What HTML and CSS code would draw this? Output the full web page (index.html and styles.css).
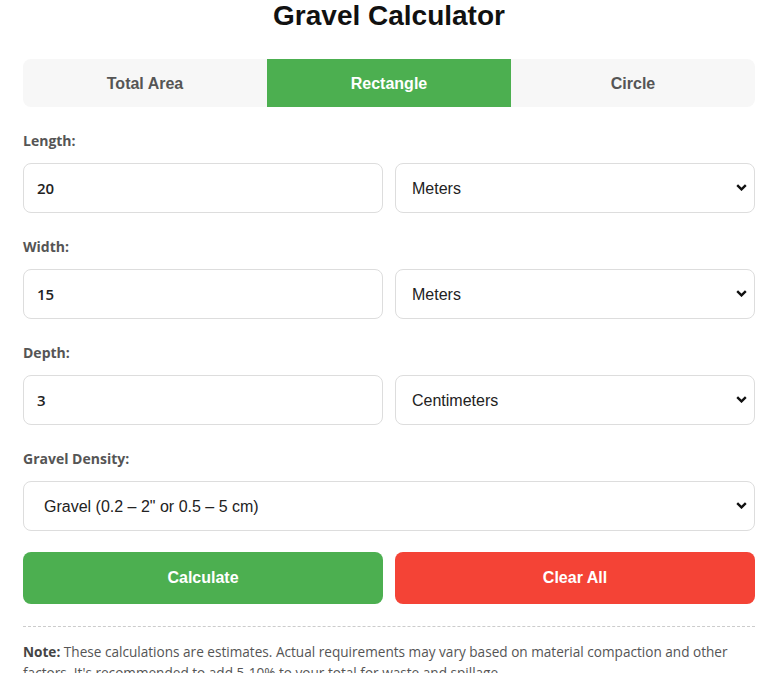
FILE: index.html
```html
<!DOCTYPE html>
<html lang="en">
<head>
<meta charset="utf-8">
<title>Gravel Calculator</title>
<link rel="stylesheet" href="styles.css">
</head>
<body>
<div class="calc">
  <h1 class="title">Gravel Calculator</h1>
  <div class="tabs">
    <button class="tab">Total Area</button>
    <button class="tab active">Rectangle</button>
    <button class="tab">Circle</button>
  </div>

  <div class="field">
    <label class="label">Length:</label>
    <div class="row">
      <input class="input" type="text" value="20">
      <div class="select-wrap">
        <select class="select"><option>Meters</option></select>
        <svg class="chev" width="11" height="7" viewBox="0 0 11 7"><path d="M1.2 1.2 L5.5 5.4 L9.8 1.2" fill="none" stroke="#111" stroke-width="2.4"/></svg>
      </div>
    </div>
  </div>

  <div class="field">
    <label class="label">Width:</label>
    <div class="row">
      <input class="input" type="text" value="15">
      <div class="select-wrap">
        <select class="select"><option>Meters</option></select>
        <svg class="chev" width="11" height="7" viewBox="0 0 11 7"><path d="M1.2 1.2 L5.5 5.4 L9.8 1.2" fill="none" stroke="#111" stroke-width="2.4"/></svg>
      </div>
    </div>
  </div>

  <div class="field">
    <label class="label">Depth:</label>
    <div class="row">
      <input class="input" type="text" value="3">
      <div class="select-wrap">
        <select class="select"><option>Centimeters</option></select>
        <svg class="chev" width="11" height="7" viewBox="0 0 11 7"><path d="M1.2 1.2 L5.5 5.4 L9.8 1.2" fill="none" stroke="#111" stroke-width="2.4"/></svg>
      </div>
    </div>
  </div>

  <div class="field">
    <label class="label">Gravel Density:</label>
    <div class="select-wrap">
      <select class="select wide"><option>Gravel (0.2 – 2" or 0.5 – 5 cm)</option></select>
      <svg class="chev" width="11" height="7" viewBox="0 0 11 7"><path d="M1.2 1.2 L5.5 5.4 L9.8 1.2" fill="none" stroke="#111" stroke-width="2.4"/></svg>
    </div>
  </div>

  <div class="actions">
    <button class="btn calc-btn">Calculate</button>
    <button class="btn clear-btn">Clear All</button>
  </div>

  <p class="note"><strong>Note:</strong> These calculations are estimates. Actual requirements may vary based on material compaction and other factors. It's recommended to add 5-10% to your total for waste and spillage.</p>
</div>
</body>
</html>
```

FILE: styles.css
```css
* { box-sizing: border-box; }
html, body { margin: 0; padding: 0; background: #fff; }
body { font-family: "Open Sans", "Noto Sans", sans-serif; color: #333; }

.calc {
  width: 781px;
  padding: 0 26px 0 23px;
  overflow: hidden;
}

.title {
  margin: 0 0 27px;
  font-family: "Liberation Sans", Arial, sans-serif;
  font-size: 28px;
  line-height: 32px;
  font-weight: 700;
  text-align: center;
  color: #111;
}

.tabs {
  display: grid;
  grid-template-columns: 1fr 1fr 1fr;
  height: 48px;
  background: #f7f7f7;
  border-radius: 8px;
  overflow: hidden;
}
.tab {
  border: 0;
  background: transparent;
  font-family: "Liberation Sans", Arial, sans-serif;
  font-size: 16px;
  font-weight: 700;
  color: #555;
  padding: 2px 0 0;
}
.tab.active { background: #4caf50; color: #fff; }

.field { margin-top: 24px; }
.label {
  display: block;
  font-size: 14px;
  line-height: 20px;
  font-weight: 700;
  color: #555;
  margin-bottom: 12px;
}
.row {
  display: grid;
  grid-template-columns: 1fr 1fr;
  gap: 12px;
}
.input, .select {
  width: 100%;
  height: 50px;
  border: 1px solid #ddd;
  border-radius: 8px;
  background: #fff;
  outline: none;
}
.input {
  padding: 0 13px;
  font-family: "Open Sans", "Noto Sans", sans-serif;
  font-size: 15px;
  font-weight: 600;
  color: #222;
}
.select-wrap { position: relative; }
.select {
  appearance: none;
  -webkit-appearance: none;
  padding: 0 16px;
  font-family: "Liberation Sans", Arial, sans-serif;
  font-size: 16px;
  color: #222;
}
.select.wide { padding-left: 20px; }
.chev {
  position: absolute;
  right: 8px;
  top: 21px;
  pointer-events: none;
}

.actions {
  display: grid;
  grid-template-columns: 1fr 1fr;
  gap: 12px;
  margin-top: 21px;
}
.btn {
  height: 52px;
  border: 0;
  border-radius: 8px;
  font-family: "Liberation Sans", Arial, sans-serif;
  font-size: 16px;
  font-weight: 700;
  color: #fff;
}
.calc-btn { background: #4caf50; }
.clear-btn { background: #f44336; }

.note {
  margin: 22px 0 0;
  padding: 14px 24px 0 0;
  border-top: 1px dashed #ccc;
  font-size: 13.6px;
  line-height: 21px;
  color: #555;
}
.note strong { color: #444; }
```
